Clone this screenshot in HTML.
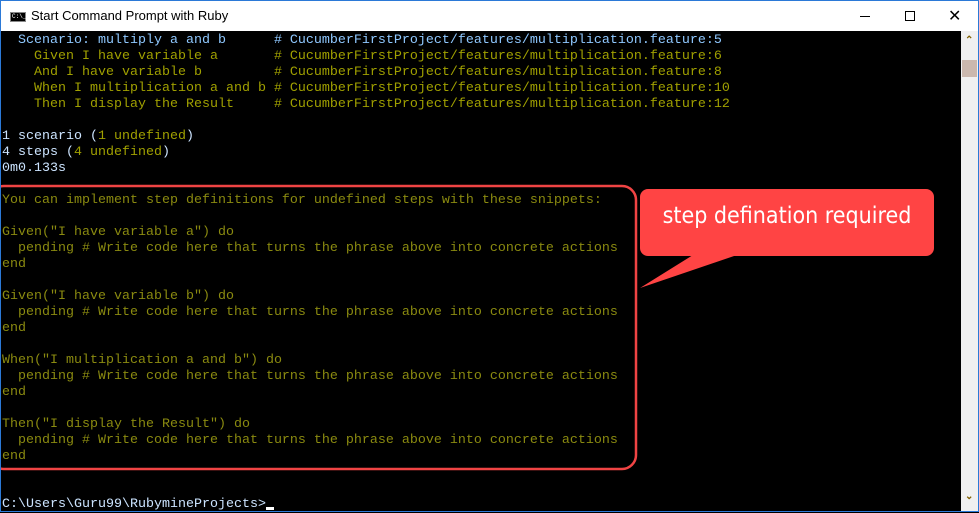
<!DOCTYPE html>
<html><head><meta charset="utf-8"><style>
*{margin:0;padding:0;box-sizing:border-box}
body{width:979px;height:512px;overflow:hidden;background:#000;position:relative;font-family:"Liberation Sans",sans-serif}
#title{position:absolute;left:0;top:0;width:979px;height:31px;background:#fff;border:1px solid #2b79d7;border-bottom:none}
#title .t{position:absolute;left:30px;top:7px;font-size:13px;color:#000}
#title .ic{position:absolute;left:9px;top:11px;width:16px;height:10px;background:#000;border:1px solid #888}
#title .ic span{position:absolute;left:1px;top:0;color:#fff;font-size:6px;font-family:"Liberation Mono",monospace}
.min{position:absolute;left:859px;top:15px;width:10px;height:1px;background:#000}
.max{position:absolute;left:904px;top:10px;width:10px;height:10px;border:1px solid #000}
.cls{position:absolute;left:947px;top:5px;font-size:16px;color:#000;font-weight:300}
#term{position:absolute;left:2px;top:33px;font-family:"Liberation Mono",monospace;font-size:13.33px;line-height:16px;white-space:pre;color:#a0a000}
.b{color:#8fc8ff}.w{color:#cce4ff}.d{color:#8a8a10}
#lb{position:absolute;left:0;top:31px;width:1px;height:481px;background:#2b79d7}
#rb{position:absolute;left:978px;top:0;width:1px;height:512px;background:#2b79d7}
#bb{position:absolute;left:0;top:511px;width:979px;height:1px;background:#2b79d7}
#sb{position:absolute;left:961px;top:31px;width:17px;height:480px;background:#f0f0f0}
.thumb{position:absolute;left:1px;top:29px;width:15px;height:17px;background:#cbb8ae}
.ar{position:absolute;left:4px;color:#806000;font-size:10px;font-weight:bold}
.bub{position:absolute;left:640px;top:203px;width:294px;text-align:center;color:#fff;font-family:"DejaVu Sans Condensed","Liberation Sans Narrow",sans-serif;font-size:23px}
.cur{display:inline-block;width:8px;height:3px;background:#fff;vertical-align:-3px}
</style></head><body>
<div id="title"><div class="ic"><span>C:\_</span></div><div class="t">Start Command Prompt with Ruby</div><div class="min"></div><div class="max"></div><div class="cls">✕</div></div>
<div id="term"><span class="b">  Scenario: multiply a and b      # CucumberFirstProject/features/multiplication.feature:5</span>
    Given I have variable a       # CucumberFirstProject/features/multiplication.feature:6
    And I have variable b         # CucumberFirstProject/features/multiplication.feature:8
    When I multiplication a and b # CucumberFirstProject/features/multiplication.feature:10
    Then I display the Result     # CucumberFirstProject/features/multiplication.feature:12

<span class="w">1 scenario (</span>1 undefined<span class="w">)</span>
<span class="w">4 steps (</span>4 undefined<span class="w">)</span>
<span class="w">0m0.133s</span>
<span class="d">
You can implement step definitions for undefined steps with these snippets:

Given("I have variable a") do
  pending # Write code here that turns the phrase above into concrete actions
end

Given("I have variable b") do
  pending # Write code here that turns the phrase above into concrete actions
end

When("I multiplication a and b") do
  pending # Write code here that turns the phrase above into concrete actions
end

Then("I display the Result") do
  pending # Write code here that turns the phrase above into concrete actions
end</span>


<span class="w">C:\Users\Guru99\RubymineProjects&gt;</span><span class="cur"></span></div>
<svg style="position:absolute;left:0;top:0" width="979" height="512">
<rect x="-10" y="186" width="646" height="283" rx="14" fill="none" stroke="#f04444" stroke-width="2.5"/>
<rect x="640" y="189" width="294" height="67" rx="8" fill="#ff4444"/>
<polygon points="693,255 737,255 640,288" fill="#ff4444"/>
</svg>
<div class="bub">step defination required</div>
<div id="sb"><div class="ar" style="top:4px">⌃</div><div class="thumb"></div><div class="ar" style="top:460px">⌄</div></div>
<div id="lb"></div><div id="rb"></div><div id="bb"></div>
</body></html>
